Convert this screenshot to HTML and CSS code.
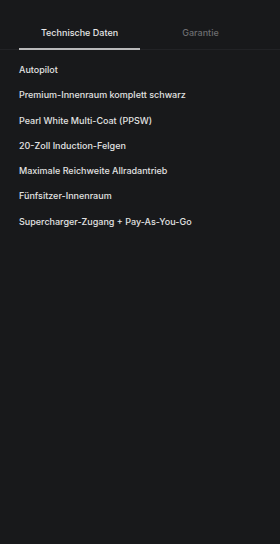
FILE: index.html
```html
<html>
<head>
	<title>Technische Daten</title>
	<meta charset="UTF-8">
	<link rel="stylesheet" href="styles.css">
	<meta name="viewport" content="width=device-width, initial-scale=1.0">
</head>
<body>

	<div class="tabs">
		<div class="tab active">Technische Daten</div>
		<div class="tab">Garantie</div>
	</div>

	<ul class="specs">
		<li>Autopilot</li>
		<li>Premium-Innenraum komplett schwarz</li>
		<li>Pearl White Multi-Coat (PPSW)</li>
		<li>20-Zoll Induction-Felgen</li>
		<li>Maximale Reichweite Allradantrieb</li>
		<li>Fünfsitzer-Innenraum</li>
		<li>Supercharger-Zugang + Pay-As-You-Go</li>
	</ul>

</body>
</html>
```

FILE: styles.css
```css
* {
	margin: 0;
	padding: 0;
}

body {
	background: #18191b;
	font-family: Inter, "Noto Sans", sans-serif;
	color: #e2e2e2;
	width: 280px;
	height: 544px;
	overflow: hidden;
}

.tabs {
	display: flex;
	padding: 21px 19px 0 19px;
	border-bottom: 1px solid #222326;
}

.tab {
	flex: 1;
	text-align: center;
	font-size: 9px;
	font-weight: 500;
	line-height: 24px;
	color: #6c6d70;
	border-bottom: 2px solid transparent;
	margin-bottom: -1px;
	padding-bottom: 3px;
}

.tab.active {
	color: #e6e6e6;
	border-bottom-color: #b9b9ba;
}

.specs {
	list-style: none;
	padding: 7px 19px 0 19px;
}

.specs li {
	font-size: 9px;
	font-weight: 500;
	line-height: 25.3px;
}
```
